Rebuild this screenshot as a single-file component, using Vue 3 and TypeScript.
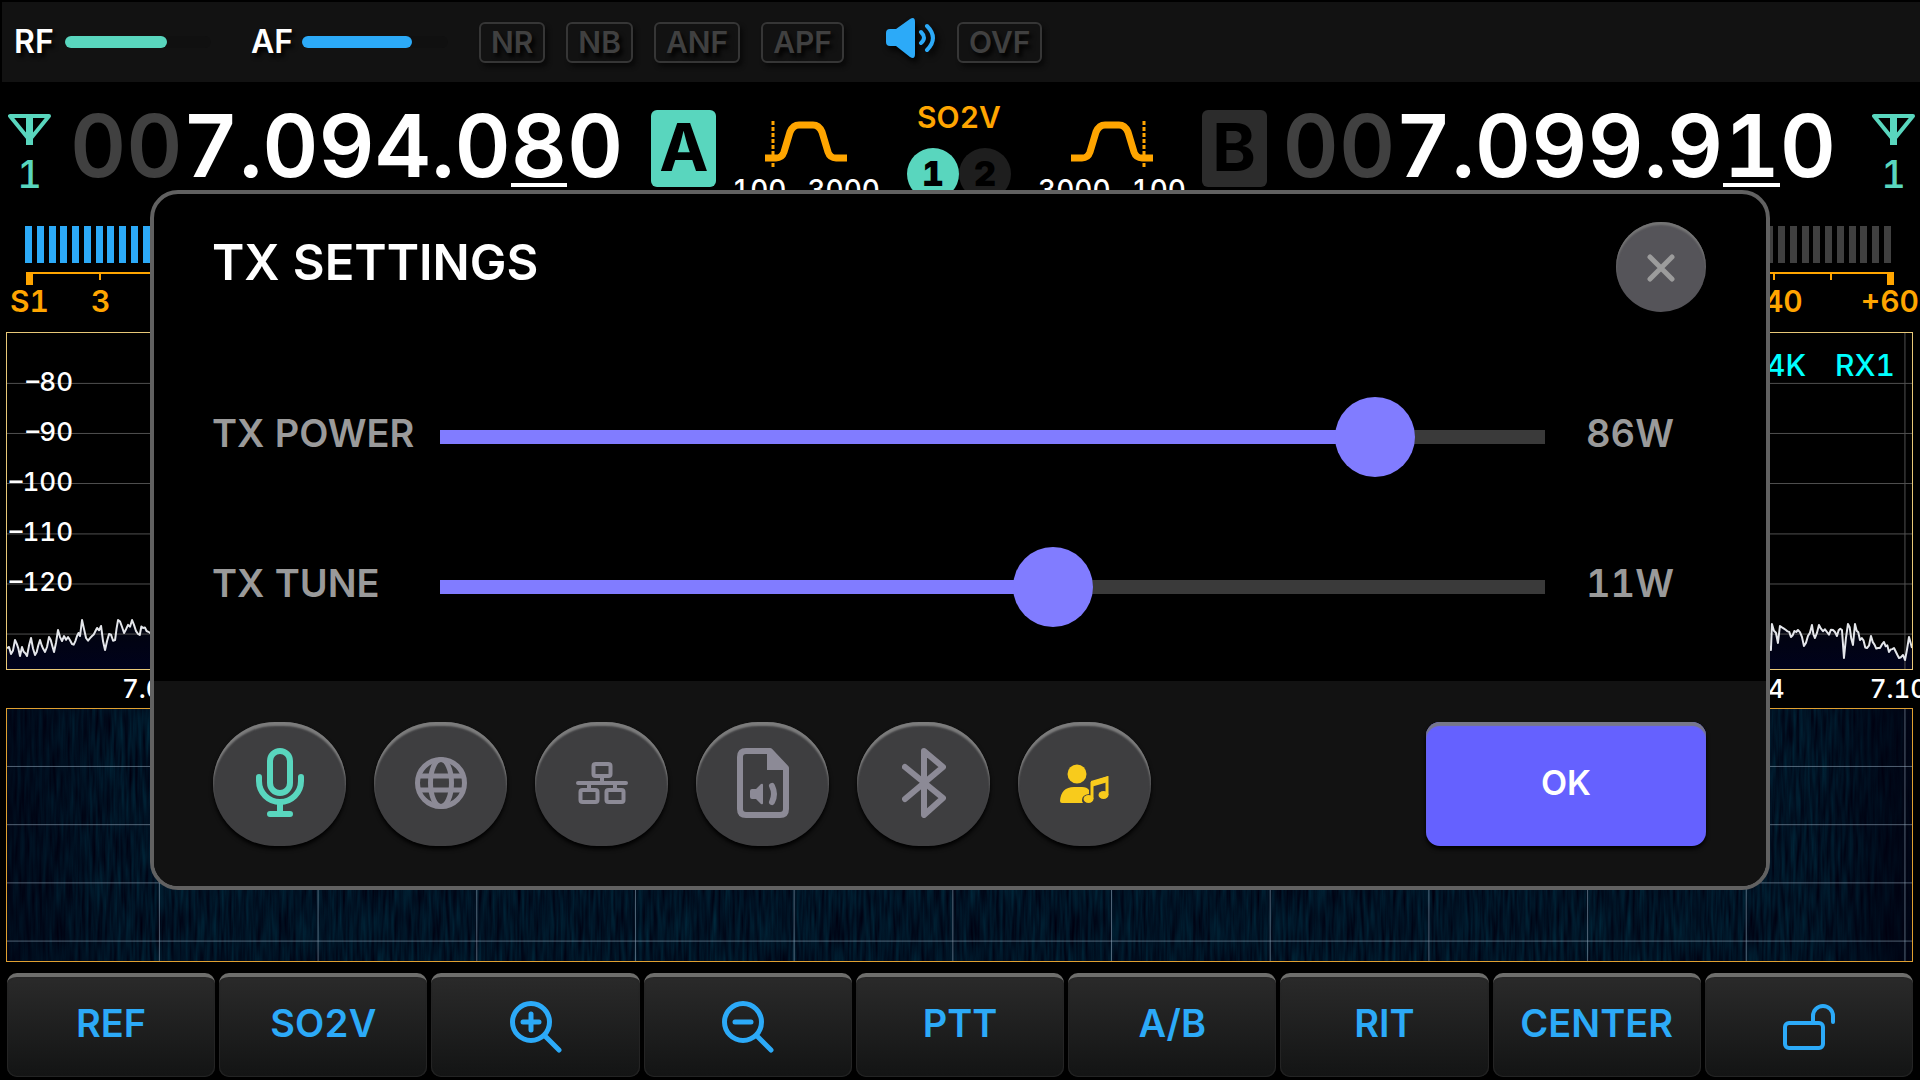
<script setup lang="ts">
import { computed, ref } from 'vue'

interface Vfo {
  id: 'A' | 'B'
  leading: string
  digits: string[]
  cursor: number
}

const vfoA: Vfo = { id: 'A', leading: '00', digits: [...'7.094.080'], cursor: 7 }
const vfoB: Vfo = { id: 'B', leading: '00', digits: [...'7.099.910'], cursor: 7 }

const dspFlags = ['NR', 'NB', 'ANF', 'APF']
const segments = Array.from({ length: 159 }, (_, i) => i < 62)
const dbLabels = ['–80', '–90', '–100', '–110', '–120']
const keys = ['REF', 'SO2V', 'zoom-in', 'zoom-out', 'PTT', 'A/B', 'RIT', 'CENTER', 'lock']

const spectrumRows = [15, 29.9, 44.8, 59.8, 74.7, 89.6]
const waterfallRows = [22.8, 45.9, 69, 92.1]
const columns = Array.from({ length: 12 }, (_, i) => 8 + i * 8.33)

/* Slider travel runs 0–1000; the radio reports the resulting wattage. */
const power = ref(873)
const tune = ref(559)
const powerWatts = computed(() => Math.round(power.value * 0.0985))
const tuneWatts = computed(() => Math.round((tune.value / 1000) ** 2 * 35))
const fill = (v: number) => ({ '--fill': `${v / 10}%` })

/* Signal peaks in plot units, on a 1904 x 336 surface. */
const peaks: [number, number][] = [
  [0, 315], [4, 321], [8, 307], [13, 323], [15, 314], [20, 323], [24, 305], [28, 322], [33, 307],
  [38, 319], [42, 304], [47, 319], [51, 297], [55, 308], [61, 304], [65, 311], [70, 303], [73, 303],
  [75, 287], [79, 305], [85, 303], [90, 295], [94, 293], [98, 317], [102, 301], [108, 307], [111, 287],
  [117, 300], [125, 287], [131, 301], [136, 295], [143, 300], [400, 296], [900, 300], [1400, 296],
  [1763, 317], [1764, 291], [1770, 310], [1772, 293], [1778, 297], [1783, 304], [1790, 297],
  [1796, 313], [1804, 292], [1807, 305], [1811, 292], [1819, 299], [1825, 297], [1829, 303],
  [1834, 297], [1836, 325], [1840, 291], [1845, 312], [1847, 291], [1852, 307], [1859, 315],
  [1863, 303], [1870, 315], [1876, 309], [1881, 319], [1886, 315], [1891, 325], [1895, 322],
  [1897, 327], [1901, 304], [1904, 315],
]

function buildTrace(): string {
  let seed = 7
  const rand = () => (seed = (seed * 16807) % 2147483647) / 2147483647
  const out: string[] = []
  for (let i = 0; i < peaks.length - 1; i++) {
    const [x0, y0] = peaks[i]
    const [x1, y1] = peaks[i + 1]
    const n = Math.max(1, Math.round((x1 - x0) / 2))
    for (let k = 0; k < n; k++) {
      const t = k / n
      const jitter = k === 0 ? 0 : (rand() - 0.5) * 8
      out.push(`${(x0 + (x1 - x0) * t).toFixed(1)},${(y0 + (y1 - y0) * t + jitter).toFixed(1)}`)
    }
  }
  out.push(peaks[peaks.length - 1].join(','))
  return out.join(' ')
}
const trace = buildTrace()
</script>

<template>
  <div class="radio">
    <header class="topbar">
      <div class="gain rf"><span>RF</span><i class="gain-track"><b></b></i></div>
      <div class="gain af"><span>AF</span><i class="gain-track"><b></b></i></div>
      <div class="flags">
        <span v-for="f in dspFlags" :key="f" class="flag">{{ f }}</span>
      </div>
      <svg class="speaker" width="49" height="40" viewBox="0 0 49 40">
        <path d="M4 11h6L24 1q5-3 5 3v32q0 6-5 3L10 28H4q-4 0-4-4v-9q0-4 4-4z" fill="currentColor" />
        <path d="M35 14q6 6 0 11M41 8q12 12 0 24" fill="none" stroke="currentColor" stroke-width="4" stroke-linecap="round" />
      </svg>
      <span class="flag">OVF</span>
    </header>

    <section class="vfos">
      <div class="vfo">
        <div class="antenna">
          <svg width="43" height="32" viewBox="0 0 43 32">
            <path d="M2 2h39L21.500 26zM21.500 2v29" fill="none" stroke="currentColor" stroke-width="4" stroke-linejoin="round" />
            <path d="M18 2h7v29h-7z" fill="currentColor" />
          </svg>
          <span>1</span>
        </div>
        <div class="freq">
          <span class="dim">{{ vfoA.leading }}</span><span v-for="(d, i) in vfoA.digits" :key="i" :class="{ cursor: i === vfoA.cursor }">{{ d }}</span>
        </div>
        <div class="vfo-id active">{{ vfoA.id }}</div>
      </div>

      <div class="middle">
        <div class="filter">
          <svg width="82" height="46" viewBox="0 0 82 46">
            <path d="M0 37h11q6 0 8-6l6-20q3-7 9-7h14q6 0 9 7l6 20q2 6 8 6h11" fill="none" stroke="currentColor" stroke-width="7" />
            <path d="M8 0v46" stroke="currentColor" stroke-width="3" stroke-dasharray="4 2" />
          </svg>
          <div class="filter-range"><span>100</span><span>3000</span></div>
        </div>
        <div class="mode">
          <span>SO2V</span>
          <div class="receivers"><b class="on">1</b><b>2</b></div>
        </div>
        <div class="filter">
          <svg width="82" height="46" viewBox="0 0 82 46">
            <path d="M0 37h11q6 0 8-6l6-20q3-7 9-7h14q6 0 9 7l6 20q2 6 8 6h11" fill="none" stroke="currentColor" stroke-width="7" />
            <path d="M73 0v46" stroke="currentColor" stroke-width="3" stroke-dasharray="4 2" />
          </svg>
          <div class="filter-range"><span>3000</span><span>100</span></div>
        </div>
      </div>

      <div class="vfo second">
        <div class="vfo-id">{{ vfoB.id }}</div>
        <div class="freq">
          <span class="dim">{{ vfoB.leading }}</span><span v-for="(d, i) in vfoB.digits" :key="i" :class="{ cursor: i === vfoB.cursor }">{{ d }}</span>
        </div>
        <div class="antenna">
          <svg width="43" height="32" viewBox="0 0 43 32">
            <path d="M2 2h39L21.500 26zM21.500 2v29" fill="none" stroke="currentColor" stroke-width="4" stroke-linejoin="round" />
            <path d="M18 2h7v29h-7z" fill="currentColor" />
          </svg>
          <span>1</span>
        </div>
      </div>
    </section>

    <section class="meter">
      <div class="segments"><i v-for="(lit, i) in segments" :key="i" :class="{ lit }"></i></div>
      <div class="scale">
        <div class="ticks low"><i class="end"></i><i></i></div>
        <div class="ticks high"><i></i><i></i><i class="end"></i></div>
      </div>
      <div class="scale-labels">
        <div class="low"><span>S1</span><span>3</span></div>
        <div class="high"><span>+40</span><span>+60</span></div>
      </div>
    </section>

    <section class="plot spectrum">
      <svg class="surface" viewBox="0 0 1904 336" preserveAspectRatio="none">
        <defs>
          <linearGradient id="floor" x1="0" y1="0" x2="0" y2="1">
            <stop offset="0" stop-color="#02040c" />
            <stop offset="1" stop-color="#00021c" />
          </linearGradient>
        </defs>
        <polygon :points="`0,336 ${trace} 1904,336`" fill="url(#floor)" />
      </svg>
      <svg class="surface">
        <g stroke="#505050">
          <line v-for="y in spectrumRows" :key="y" x1="0" x2="100%" :y1="y + '%'" :y2="y + '%'" />
          <line v-for="x in columns" :key="x" y1="0" y2="100%" :x1="x + '%'" :x2="x + '%'" />
        </g>
      </svg>
      <svg class="surface" viewBox="0 0 1904 336" preserveAspectRatio="none">
        <polyline :points="trace" fill="none" stroke="#e4e6ea" stroke-width="2" stroke-linejoin="round" />
      </svg>
      <div class="db"><span v-for="d in dbLabels" :key="d">{{ d }}</span></div>
      <div class="rx"><span>2.4K</span><span>RX1</span></div>
    </section>

    <div class="freq-axis">
      <span>7.094</span>
      <div><span>7.104</span><span>7.105</span></div>
    </div>

    <section class="plot waterfall">
      <svg class="surface">
        <defs>
          <filter id="rain" x="0" y="0" width="100%" height="100%" color-interpolation-filters="sRGB">
            <feTurbulence type="fractalNoise" baseFrequency="0.28 0.025" numOctaves="2" seed="4" />
            <feColorMatrix values="0 0 0 0 0  0.22 0 0 0 -0.03  0.24 0 0 0 0.03  0 0 0 0 1" />
          </filter>
          <linearGradient id="edges">
            <stop offset="0" stop-color="#00000f" stop-opacity="0.55" />
            <stop offset="0.06" stop-color="#00000f" stop-opacity="0.1" />
            <stop offset="0.95" stop-color="#00000f" stop-opacity="0.1" />
            <stop offset="1" stop-color="#00000f" stop-opacity="0.8" />
          </linearGradient>
        </defs>
        <rect width="100%" height="100%" filter="url(#rain)" />
        <rect width="100%" height="100%" fill="url(#edges)" />
        <g stroke="#96aabe" stroke-opacity="0.55">
          <line v-for="y in waterfallRows" :key="y" x1="0" x2="100%" :y1="y + '%'" :y2="y + '%'" />
          <line v-for="x in columns" :key="x" y1="0" y2="100%" :x1="x + '%'" :x2="x + '%'" />
        </g>
      </svg>
    </section>

    <nav class="keys">
      <button v-for="k in keys" :key="k" type="button" :aria-label="k">
        <svg v-if="k === 'zoom-in' || k === 'zoom-out'" width="52" height="52" viewBox="0 0 52 52" fill="none" stroke="currentColor" stroke-width="5" stroke-linecap="round">
          <circle cx="21" cy="21" r="18.500" />
          <path d="M35 35l14 14M13 21h16" />
          <path v-if="k === 'zoom-in'" d="M21 13v16" />
        </svg>
        <svg v-else-if="k === 'lock'" width="52" height="46" viewBox="0 0 52 46" fill="none" stroke="currentColor" stroke-width="4" stroke-linecap="round">
          <rect x="2" y="19" width="38" height="25" rx="4" />
          <path d="M30 18v-6a10 10 0 0 1 20 0v6" />
        </svg>
        <template v-else>{{ k }}</template>
      </button>
    </nav>

    <div class="overlay">
      <div class="dialog" role="dialog" aria-labelledby="dialog-title">
        <div class="dialog-head">
          <h1 id="dialog-title">TX SETTINGS</h1>
          <button type="button" class="close" aria-label="Close">
            <svg width="28" height="28" viewBox="0 0 28 28" fill="none" stroke="currentColor" stroke-width="5" stroke-linecap="round">
              <path d="M3 3l22 22M25 3L3 25" />
            </svg>
          </button>
        </div>
        <div class="rows">
          <div class="row">
            <label for="tx-power">TX POWER</label>
            <input id="tx-power" v-model.number="power" type="range" min="0" max="1000" :style="fill(power)" />
            <output for="tx-power">{{ powerWatts }}W</output>
          </div>
          <div class="row">
            <label for="tx-tune">TX TUNE</label>
            <input id="tx-tune" v-model.number="tune" type="range" min="0" max="1000" :style="fill(tune)" />
            <output for="tx-tune">{{ tuneWatts }}W</output>
          </div>
        </div>
        <div class="dialog-foot">
          <div class="sources">
            <button type="button" class="mic" aria-label="Microphone">
              <svg width="48" height="70" viewBox="0 0 48 70" fill="none" stroke="currentColor" stroke-width="6" stroke-linecap="round">
                <rect x="14" y="3" width="20" height="42" rx="10" />
                <path d="M3 29v4a21 21 0 0 0 42 0v-4M24 55v10M14 66h20" />
              </svg>
            </button>
            <button type="button" aria-label="Internet">
              <svg width="52" height="52" viewBox="0 0 52 52" fill="none" stroke="currentColor" stroke-width="5">
                <circle cx="26" cy="26" r="23.500" />
                <ellipse cx="26" cy="26" rx="10.500" ry="23.500" />
                <path d="M4 19h44M4 33h44" />
              </svg>
            </button>
            <button type="button" aria-label="Network">
              <svg width="52" height="42" viewBox="0 0 52 42" fill="none" stroke="currentColor" stroke-width="4" stroke-linecap="round">
                <rect x="17.500" y="2" width="17" height="12" rx="2" />
                <rect x="4.500" y="28" width="17" height="12" rx="2" />
                <rect x="30.500" y="28" width="17" height="12" rx="2" />
                <path d="M2 21h48M26 14v7M13 21v7M39 21v7" />
              </svg>
            </button>
            <button type="button" aria-label="Audio file">
              <svg width="52" height="70" viewBox="0 0 52 70" fill="none" stroke="currentColor" stroke-width="6" stroke-linejoin="round">
                <path d="M9 3h24l16 17v41q0 6-6 6H9q-6 0-6-6V9q0-6 6-6z" />
                <path d="M30 2v20h20v-3L33 2z" fill="currentColor" stroke="none" />
                <path d="M15 41h4l5-5q2-1 2 1v18q0 2-2 1l-5-5h-4q-2 0-2-2v-6q0-2 2-2z" fill="currentColor" stroke="none" />
                <path d="M35 38q4 8 0 16" stroke-linecap="round" />
              </svg>
            </button>
            <button type="button" aria-label="Bluetooth">
              <svg width="44" height="70" viewBox="0 0 44 70" fill="none" stroke="currentColor" stroke-width="6" stroke-linecap="round" stroke-linejoin="round">
                <path d="M3 19l38 31-19 17V3l19 16L3 51" />
              </svg>
            </button>
            <button type="button" class="voice" aria-label="Voice player">
              <svg width="49" height="39" viewBox="0 0 49 39" fill="currentColor">
                <circle cx="17" cy="10" r="9.500" />
                <path d="M2 39q-2 0-2-2Q1 23 14 23h8q5 0 7 3v4q-7 1-7 6 0 2 1 3z" />
                <path d="M32 35V19l15-5v17" fill="none" stroke="currentColor" stroke-width="3" />
                <path d="M31 17l17-5v6l-17 5z" />
                <ellipse cx="28.500" cy="35" rx="5" ry="4" />
                <ellipse cx="43.500" cy="31" rx="5" ry="4" />
              </svg>
            </button>
          </div>
          <button type="button" class="ok">OK</button>
        </div>
      </div>
    </div>
  </div>
</template>

<style>
body {
  margin: 0;
  background: #000;
}
</style>

<style scoped>
.radio {
  position: relative;
  display: flex;
  flex-direction: column;
  min-height: 100vh;
  overflow: hidden;
  background: #000;
  color: #fff;
  font-family: Inter, "Liberation Sans", sans-serif;
  font-size: 30px;
  font-weight: 600;
  font-variant-numeric: tabular-nums;
  line-height: 30px;
  box-sizing: border-box;
}
.radio * {
  box-sizing: border-box;
}
button {
  border: 0;
  padding: 0;
  font: inherit;
  font-variant-numeric: tabular-nums;
  color: inherit;
  display: flex;
  align-items: center;
  justify-content: center;
}
svg {
  display: block;
  flex: none;
}

/* Top status bar */
.topbar {
  display: flex;
  align-items: center;
  height: 80px;
  margin: 2px 0 0 2px;
  padding-left: 12px;
  background: #121212;
}
.gain {
  display: flex;
  align-items: center;
  gap: 9px;
  width: 237px;
  font-size: 32px;
  text-shadow: 3px 4px 4px #000;
}
.gain span {
  width: 42px;
}
.gain-track {
  width: 146px;
  height: 12px;
  border-radius: 6px;
  background: #101010;
}
.gain-track b {
  display: block;
  height: 12px;
  border-radius: 6px;
}
.rf b {
  width: 70%;
  background: #59d6be;
}
.af b {
  width: 75%;
  background: #2caaf8;
}
.af {
  width: 228px;
}
.flags {
  display: flex;
  gap: 21px;
}
.flag {
  height: 41px;
  padding: 0 10px;
  border: 2px solid #363636;
  border-radius: 6px;
  color: #404040;
  line-height: 37px;
  text-shadow: 3px 4px 4px #000;
  box-shadow: 3px 4px 4px #0a0a0a;
}
.speaker {
  margin: 0 22px 8px 42px;
  color: #2caaf8;
  filter: drop-shadow(3px 4px 3px #000);
}

/* VFO readouts */
.vfos {
  display: flex;
  justify-content: space-between;
  height: 144px;
  padding: 0 5px 0 8px;
}
.vfo {
  display: flex;
  align-items: flex-start;
}
.antenna {
  display: flex;
  flex-direction: column;
  align-items: center;
  gap: 9px;
  width: 43px;
  padding-top: 32px;
  color: #59d6be;
  font-size: 38px;
  font-weight: 500;
  line-height: 38px;
}
.freq {
  display: flex;
  margin: 27px 28px 0 19px;
  font-size: 87px;
  font-weight: 600;
  line-height: 74px;
}
.second .freq {
  margin: 27px 36px 0 16px;
}
.dim {
  color: #404040;
}
.cursor {
  border-bottom: 4px solid #fff;
}
.vfo-id {
  width: 65px;
  height: 77px;
  margin-top: 28px;
  border-radius: 6px;
  background: #2c2c2c;
  color: #000;
  font-size: 66px;
  font-weight: 700;
  line-height: 74px;
  text-align: center;
}
.vfo-id.active {
  background: #59d6be;
}
.middle {
  display: flex;
  gap: 27px;
}
.filter {
  display: flex;
  flex-direction: column;
  align-items: center;
  gap: 8px;
  width: 148px;
  padding-top: 39px;
  color: #ffa500;
}
.filter-range {
  display: flex;
  justify-content: space-between;
  width: 100%;
  color: #fff;
  font-size: 28px;
  font-weight: 500;
}
.mode {
  display: flex;
  flex-direction: column;
  align-items: center;
  gap: 16px;
  padding-top: 20px;
  color: #ffa500;
}
.receivers {
  display: flex;
}
.receivers b {
  width: 52px;
  height: 52px;
  border-radius: 50%;
  background: #1e1e1e;
  color: #000;
  font-size: 34px;
  line-height: 52px;
  text-align: center;
}
.receivers .on {
  background: #59d6be;
}

/* S-meter */
.meter {
  color: #ffa500;
}
.segments {
  display: flex;
  justify-content: space-between;
  padding: 0 27px 0 25px;
}
.segments i {
  width: 7px;
  height: 37px;
  background: #404040;
}
.segments .lit {
  background: #2caaf8;
}
.scale {
  display: flex;
  justify-content: space-between;
  height: 14px;
  margin: 9px 26px 0 26px;
  border-top: 2px solid #ffa500;
}
.ticks {
  display: flex;
}
.ticks.low {
  gap: 66px;
}
.ticks.high {
  gap: 55px;
}
.ticks i {
  width: 2px;
  height: 6px;
  background: #ffa500;
}
.ticks .end {
  width: 7px;
  height: 11px;
}
.scale-labels {
  display: flex;
  justify-content: space-between;
  height: 46px;
  padding: 0 1px 0 10px;
}
.low,
.high {
  display: flex;
}
.scale-labels .low {
  gap: 42px;
}
.scale-labels .high {
  gap: 58px;
}

/* Spectrum and waterfall */
.plot {
  position: relative;
  margin: 0 7px 0 6px;
  overflow: hidden;
}
.surface {
  position: absolute;
  inset: 0;
  width: 100%;
  height: 100%;
}
.spectrum {
  flex: 4 1 0;
  border: 1px solid #e8c878;
}
.db {
  position: absolute;
  top: 24px;
  left: 0;
  display: flex;
  flex-direction: column;
  width: 66px;
  font-size: 26px;
  font-weight: 500;
  line-height: 50px;
  text-align: right;
}
.rx {
  position: absolute;
  top: 17px;
  right: 17px;
  display: flex;
  gap: 29px;
  color: #0ff;
  font-weight: 500;
}
.freq-axis {
  display: flex;
  justify-content: space-between;
  height: 38px;
  padding-left: 122px;
  font-size: 26px;
  font-weight: 500;
  line-height: 38px;
}
.freq-axis div {
  display: flex;
  gap: 85px;
  margin-right: -24px;
}
.waterfall {
  flex: 3 1 0;
  border: 1px solid #e0a030;
}

/* Bottom keys */
.keys {
  display: flex;
  gap: 4px;
  margin-top: 11px;
  padding: 0 7px 3px;
}
.keys button {
  flex: 1 1 0;
  height: 104px;
  border-top: 4px solid #6e6e6c;
  border-radius: 10px;
  background: linear-gradient(#2a2a2a, #131414);
  box-shadow: inset 0 0 1px 1px #262626;
  color: #2caaf8;
  font-size: 38px;
  padding-bottom: 8px;
}
.keys svg {
  margin-top: 8px;
}

/* Dialog */
.overlay {
  position: absolute;
  inset: 0;
  display: flex;
  align-items: center;
  padding: 0 150px;
}
.dialog {
  flex: 1;
  overflow: hidden;
  border: 4px solid #616161;
  border-radius: 28px;
  background: #000;
}
.dialog-head {
  display: flex;
  align-items: center;
  justify-content: space-between;
  padding: 28px 60px 0 58px;
}
h1 {
  margin: 0;
  padding-bottom: 8px;
  font-size: 49px;
  font-weight: 600;
  line-height: 50px;
}
.close {
  width: 90px;
  height: 90px;
  border-radius: 50%;
  background: #555459;
  box-shadow: inset 0 3px 2px #757575;
  color: #9c9c9c;
  padding-top: 2px;
}
.rows {
  display: flex;
  flex-direction: column;
  gap: 70px;
  padding: 85px 60px 54px 58px;
}
.row {
  display: grid;
  grid-template-columns: 228px 1fr 161px;
  align-items: center;
  color: #9a9a9a;
  font-size: 38px;
}
.row label,
.row output {
  padding-bottom: 9px;
}
.row output {
  padding-left: 41px;
}
input[type="range"] {
  appearance: none;
  width: 100%;
  height: 80px;
  margin: 0;
  background: transparent;
}
input[type="range"]::-webkit-slider-runnable-track {
  height: 14px;
  background: linear-gradient(to right, #817cff var(--fill), #3a3a3a var(--fill));
}
input[type="range"]::-webkit-slider-thumb {
  appearance: none;
  width: 80px;
  height: 80px;
  margin-top: -33px;
  border-radius: 50%;
  background: #817cff;
}
.dialog-foot {
  display: flex;
  justify-content: space-between;
  padding: 41px 60px 40px 59px;
  background: #121212;
}
.sources {
  display: flex;
  gap: 28px;
}
.sources button {
  width: 133px;
  height: 124px;
  border-radius: 62px;
  background: #3e3e40;
  box-shadow: inset 0 4px 2px #7c7c7c, 0 3px 4px #000;
  color: #8c8a96;
  padding-bottom: 2px;
}
.sources .mic {
  color: #59d6be;
}
.sources .voice {
  color: #f8cb1c;
}
.ok {
  width: 280px;
  height: 124px;
  border-radius: 14px;
  background: #6561ff;
  box-shadow: inset 0 4px 1px #77778a, 0 3px 4px #000;
  font-size: 34px;
  padding-bottom: 2px;
}
</style>
